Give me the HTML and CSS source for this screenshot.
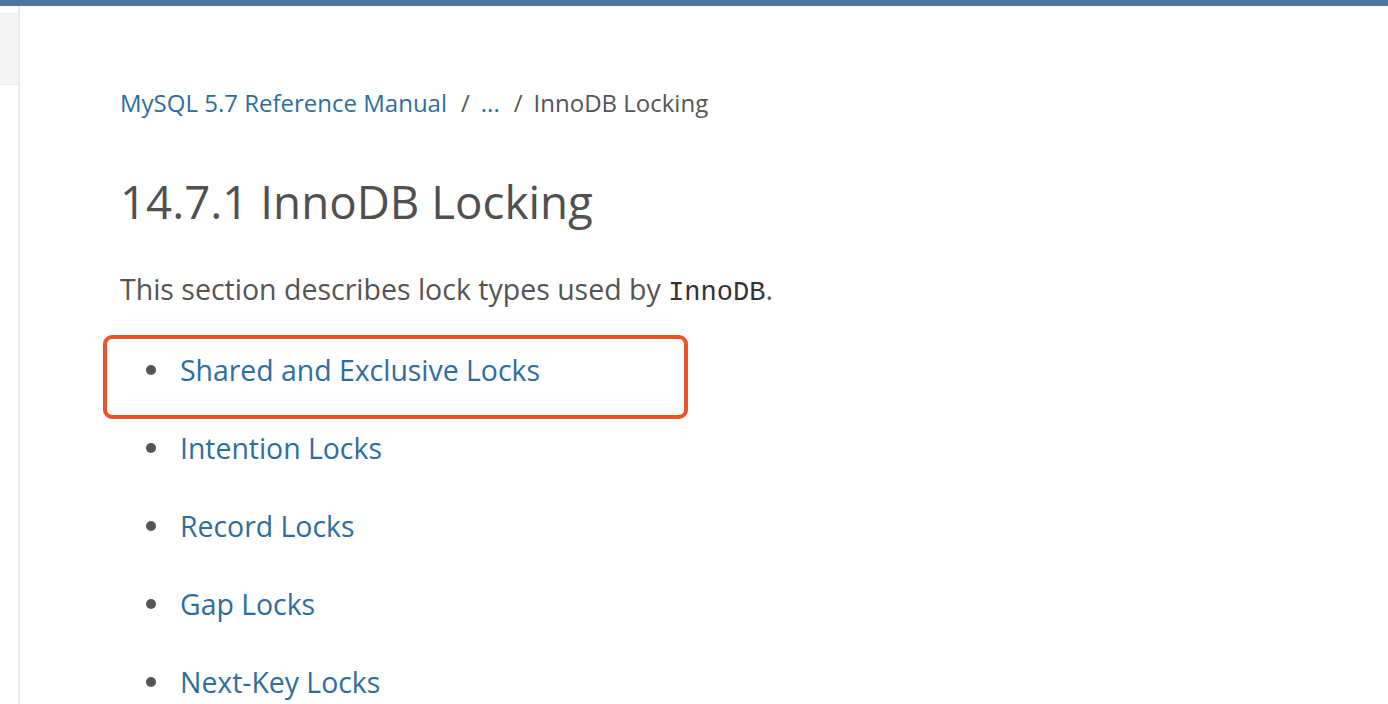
FILE: index.html
```html
<!DOCTYPE html>
<html>
<head>
<meta charset="utf-8">
<link rel="stylesheet" href="styles.css">
</head>
<body>
<div class="topbar"></div>
<div class="layout">
  <aside class="sidebar">
    <div class="side-panel"></div>
  </aside>
  <main class="content">
    <nav class="breadcrumb">
      <a href="#">MySQL 5.7 Reference Manual</a>
      <span class="sep">/</span>
      <a href="#">...</a>
      <span class="sep">/</span>
      <span class="current">InnoDB Locking</span>
    </nav>
    <h1 class="title">14.7.1 InnoDB Locking</h1>
    <p class="intro">This section describes lock types used by <code>InnoDB</code>.</p>
    <ul class="locks">
      <li class="highlighted"><span class="mark"></span><a href="#">Shared and Exclusive Locks</a></li>
      <li><a href="#">Intention Locks</a></li>
      <li><a href="#">Record Locks</a></li>
      <li><a href="#">Gap Locks</a></li>
      <li><a href="#">Next-Key Locks</a></li>
    </ul>
  </main>
</div>
</body>
</html>
```
FILE: styles.css
```css
html, body {
  margin: 0;
  padding: 0;
  background: #fff;
  height: 100%;
  overflow: hidden;
}
body {
  font-family: "Open Sans", "Liberation Sans", sans-serif;
  color: #555;
}
.topbar {
  height: 6px;
  background: #4b76a0;
}
.layout {
  display: flex;
  height: 698px;
}
.sidebar {
  width: 18px;
  flex: none;
  border-right: 2px solid #ebebeb;
  padding-top: 7px;
}
.side-panel {
  height: 70px;
  background: #f5f5f5;
  border-top: 1px solid #e9e9e9;
  border-bottom: 1px solid #e9e9e9;
}
.content {
  flex: 1;
  padding: 0 0 0 100px;
}
a {
  color: #2d6e9e;
  text-decoration: none;
}
.breadcrumb {
  margin-top: 80px;
  font-size: 24px;
  line-height: 33px;
  display: flex;
}
.breadcrumb .sep {
  margin: 0 11px 0 14px;
  color: #555;
}
.breadcrumb .current {
  color: #555;
}
.title {
  margin: 53px 0 0;
  font-size: 45.7px;
  font-weight: 400;
  line-height: 58px;
  color: #505050;
}
.intro {
  margin: 38px 0 0;
  font-size: 28.5px;
  line-height: 42px;
}
.intro code {
  font-family: "Liberation Mono", "Courier New", monospace;
  font-size: 27px;
  color: #333;
}
.locks {
  list-style: none;
  margin: 35px 0 0;
  padding: 0 0 0 60px;
}
.locks li {
  position: relative;
  font-size: 28.4px;
  line-height: 42px;
  margin-bottom: 36px;
}
.locks li::before {
  content: "";
  position: absolute;
  left: -34px;
  top: 16px;
  width: 10px;
  height: 10px;
  border-radius: 50%;
  background: #555;
}
.mark {
  position: absolute;
  left: -77px;
  top: -14px;
  width: 577px;
  height: 76px;
  border: 4px solid #ee5226;
  border-radius: 9px;
}
```
